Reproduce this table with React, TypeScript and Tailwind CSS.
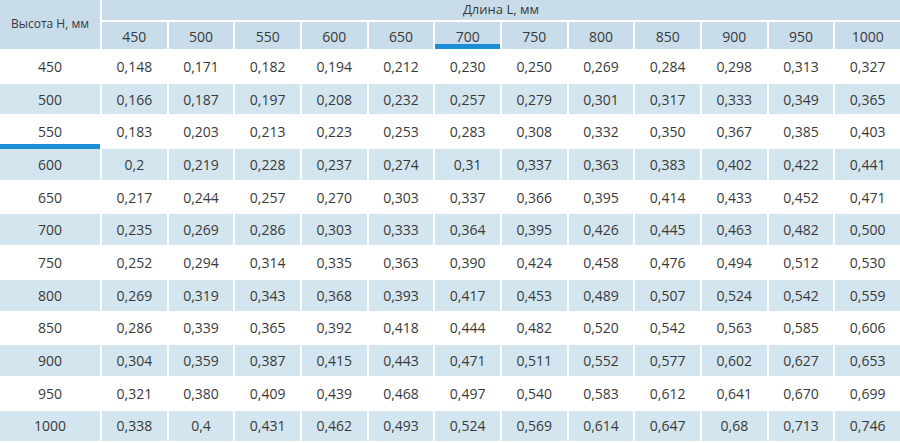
const lengths = [450, 500, 550, 600, 650, 700, 750, 800, 850, 900, 950, 1000]

const rows: { h: number; v: string[] }[] = [
  { h: 450, v: ['0,148', '0,171', '0,182', '0,194', '0,212', '0,230', '0,250', '0,269', '0,284', '0,298', '0,313', '0,327'] },
  { h: 500, v: ['0,166', '0,187', '0,197', '0,208', '0,232', '0,257', '0,279', '0,301', '0,317', '0,333', '0,349', '0,365'] },
  { h: 550, v: ['0,183', '0,203', '0,213', '0,223', '0,253', '0,283', '0,308', '0,332', '0,350', '0,367', '0,385', '0,403'] },
  { h: 600, v: ['0,2', '0,219', '0,228', '0,237', '0,274', '0,31', '0,337', '0,363', '0,383', '0,402', '0,422', '0,441'] },
  { h: 650, v: ['0,217', '0,244', '0,257', '0,270', '0,303', '0,337', '0,366', '0,395', '0,414', '0,433', '0,452', '0,471'] },
  { h: 700, v: ['0,235', '0,269', '0,286', '0,303', '0,333', '0,364', '0,395', '0,426', '0,445', '0,463', '0,482', '0,500'] },
  { h: 750, v: ['0,252', '0,294', '0,314', '0,335', '0,363', '0,390', '0,424', '0,458', '0,476', '0,494', '0,512', '0,530'] },
  { h: 800, v: ['0,269', '0,319', '0,343', '0,368', '0,393', '0,417', '0,453', '0,489', '0,507', '0,524', '0,542', '0,559'] },
  { h: 850, v: ['0,286', '0,339', '0,365', '0,392', '0,418', '0,444', '0,482', '0,520', '0,542', '0,563', '0,585', '0,606'] },
  { h: 900, v: ['0,304', '0,359', '0,387', '0,415', '0,443', '0,471', '0,511', '0,552', '0,577', '0,602', '0,627', '0,653'] },
  { h: 950, v: ['0,321', '0,380', '0,409', '0,439', '0,468', '0,497', '0,540', '0,583', '0,612', '0,641', '0,670', '0,699'] },
  { h: 1000, v: ['0,338', '0,4', '0,431', '0,462', '0,493', '0,524', '0,569', '0,614', '0,647', '0,68', '0,713', '0,746'] },
]

export default function App() {
  return (
    <div className="w-[900px] h-[443px] bg-white overflow-hidden font-['Open_Sans',sans-serif] text-[#3a3a3a]">
      <div className="grid grid-cols-[100px_repeat(12,1fr)] grid-rows-[20px_27px_repeat(12,30.7px)] gap-x-[2px] gap-y-[2px]">
        {/* header */}
        <div className="row-span-2 bg-[#c8dcea] flex items-center justify-center text-[12px] pb-[1px]">
          Высота H, мм
        </div>
        <div className="col-span-12 bg-[#c8dcea] flex items-center justify-center text-[13px]">
          Длина L, мм
        </div>
        {lengths.map((l) => (
          <div key={l} className="relative bg-[#c8dcea] flex items-center justify-center text-[14px] pt-[2px]">
            {l}
            {l === 700 && <span className="absolute left-0 right-0 bottom-0 h-[5px] bg-[#1b8fd6]" />}
          </div>
        ))}

        {/* body */}
        {rows.map((r, i) => {
          const bg = i % 2 === 1 ? 'bg-[#d3e5ef]' : 'bg-white'
          return [
            <div key={r.h} className={`relative ${bg} flex items-center justify-center text-[14px]`}>
              {r.h}
              {r.h === 550 && <span className="absolute left-0 right-0 -bottom-[2px] h-[5px] bg-[#1b8fd6]" />}
            </div>,
            ...r.v.map((v, j) => (
              <div key={`${r.h}-${j}`} className={`${bg} flex items-center justify-center text-[14px]`}>
                {v}
              </div>
            )),
          ]
        })}
      </div>
    </div>
  )
}
